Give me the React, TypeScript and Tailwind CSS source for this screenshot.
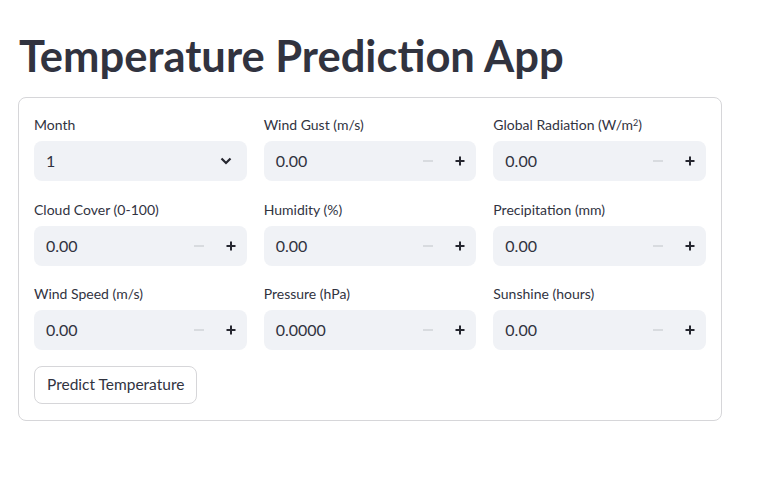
const fields: { label: React.ReactNode; value: string; select?: boolean }[] = [
  { label: "Month", value: "1", select: true },
  { label: "Wind Gust (m/s)", value: "0.00" },
  { label: <>Global Radiation (W/m<sup className="text-[9px]">2</sup>)</>, value: "0.00" },
  { label: "Cloud Cover (0-100)", value: "0.00" },
  { label: "Humidity (%)", value: "0.00" },
  { label: "Precipitation (mm)", value: "0.00" },
  { label: "Wind Speed (m/s)", value: "0.00" },
  { label: "Pressure (hPa)", value: "0.0000" },
  { label: "Sunshine (hours)", value: "0.00" },
];

function Minus() {
  return (
    <svg width="12" height="12" viewBox="0 0 12 12">
      <path d="M1 6h10" stroke="#d3d5da" strokeWidth="1.6" />
    </svg>
  );
}

function Plus() {
  return (
    <svg width="12" height="12" viewBox="0 0 12 12">
      <path d="M1.5 6h9M6 1.5v9" stroke="#262730" strokeWidth="2" />
    </svg>
  );
}

function Chevron() {
  return (
    <svg width="14" height="14" viewBox="0 0 14 14">
      <path d="M2.5 4.5 7 9l4.5-4.5" fill="none" stroke="#262730" strokeWidth="2.2" />
    </svg>
  );
}

function Field({ label, value, select }: { label: React.ReactNode; value: string; select?: boolean }) {
  return (
    <div className="flex flex-col">
      <label className="h-6 mb-1 text-[14px] leading-6 text-[#31333f]">{label}</label>
      {select ? (
        <div className="h-10 rounded-lg bg-[#f0f2f6] flex items-center justify-between pl-3 pr-[14px]">
          <span className="text-[16px] text-[#31333f]">{value}</span>
          <Chevron />
        </div>
      ) : (
        <div className="h-10 rounded-lg bg-[#f0f2f6] flex items-center">
          <span className="flex-1 pl-3 text-[16px] text-[#31333f]">{value}</span>
          <div className="w-8 h-full flex items-center justify-center"><Minus /></div>
          <div className="w-8 h-full flex items-center justify-center"><Plus /></div>
        </div>
      )}
    </div>
  );
}

export default function App() {
  return (
    <div className="min-h-[499px] bg-white pl-[18px] pr-[36px] pt-[29px] font-['Lato',sans-serif] text-[#31333f]">
      <h1 className="text-[43.5px] leading-[53px] font-bold pl-[1px] mb-[15px]">Temperature Prediction App</h1>
      <div className="border border-[#d6d6d9] rounded-lg pt-[15px] px-[15px] pb-4">
        <div className="grid grid-cols-3 gap-x-[17px] gap-y-[16.5px]">
          {fields.map((f, i) => (
            <Field key={i} label={f.label} value={f.value} select={f.select} />
          ))}
        </div>
        <button className="mt-4 h-[38px] px-3 rounded-lg border border-[#d6d6d9] bg-white text-[15.5px] text-[#31333f]">
          Predict Temperature
        </button>
      </div>
    </div>
  );
}
